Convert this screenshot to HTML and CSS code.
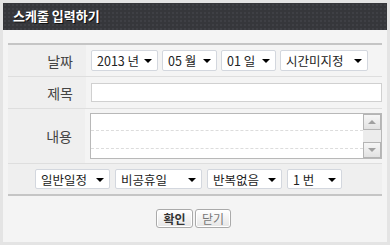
FILE: index.html
```html
<!DOCTYPE html>
<html>
<head>
  <meta charset="UTF-8">
  <title>스케줄 입력하기</title>
  <link rel="stylesheet" href="styles.css">
</head>
<body>
  <div class="popup">
    <div class="popup-title">스케줄 입력하기</div>

    <div class="sch-form">
      <div class="sch-row row-date">
        <div class="sch-label">날짜</div>
        <div class="sch-field">
          <span class="sel w67">2013 년<i class="arr"></i></span>
          <span class="sel w55">05 월<i class="arr"></i></span>
          <span class="sel w55">01 일<i class="arr"></i></span>
          <span class="sel w88">시간미지정<i class="arr"></i></span>
        </div>
      </div>
      <div class="sch-row row-title">
        <div class="sch-label">제목</div>
        <div class="sch-field">
          <input type="text" class="txt-title">
        </div>
      </div>
      <div class="sch-row row-memo">
        <div class="sch-label">내용</div>
        <div class="sch-field">
          <div class="memo">
            <div class="memo-lines"></div>
            <div class="memo-scroll">
              <span class="sb-btn"><i class="sb-up"></i></span>
              <span class="sb-track"></span>
              <span class="sb-btn"><i class="sb-down"></i></span>
            </div>
          </div>
        </div>
      </div>
      <div class="sch-row row-opt">
        <span class="sel w75">일반일정<i class="arr"></i></span>
        <span class="sel w87">비공휴일<i class="arr"></i></span>
        <span class="sel w75">반복없음<i class="arr"></i></span>
        <span class="sel w55">1 번<i class="arr"></i></span>
      </div>
    </div>

    <div class="btn-area">
      <button class="btn btn-ok">확인</button>
      <button class="btn">닫기</button>
    </div>
  </div>
</body>
</html>
```

FILE: styles.css
```css
html, body {
  margin: 0;
  padding: 0;
}
body {
  width: 390px;
  height: 245px;
  box-sizing: border-box;
  padding: 3px;
  background-color: #e4e4e4;
  font-family: "Noto Sans CJK KR", "Noto Sans", sans-serif;
  font-size: 13px;
  color: #333;
}
.popup {
  height: 239px;
  background-color: #f4f4f4;
}
.popup-title {
  height: 27px;
  line-height: 26px;
  padding-left: 10px;
  font-size: 13px;
  font-weight: bold;
  color: #fff;
  text-shadow: 1px 1px 0 #111;
  background-color: #36373b;
  background-image: radial-gradient(circle, #3f4045 1px, transparent 1px);
  background-size: 4px 4px;
}

/* form */
.sch-form {
  margin: 13px 5px 0;
  border-top: 2px solid #c5c5c5;
  border-bottom: 2px solid #c5c5c5;
}
.sch-row {
  display: flex;
  border-bottom: 1px solid #dedede;
}
.sch-row:last-child {
  border-bottom: none;
}
.row-date { height: 31px; }
.row-title { height: 31px; }
.row-memo { height: 54px; }
.row-opt {
  height: 30px;
  align-items: center;
  gap: 5px;
  padding-left: 27px;
  background-color: #efefef;
}
.sch-label {
  width: 78px;
  box-sizing: border-box;
  padding-right: 13px;
  display: flex;
  align-items: center;
  justify-content: flex-end;
  background-color: #efefef;
  font-size: 14px;
  color: #444;
}
.sch-field {
  flex: 1;
  display: flex;
  align-items: center;
  gap: 4px;
  padding-left: 5px;
}

/* select boxes */
.sel {
  position: relative;
  display: flex;
  align-items: center;
  box-sizing: border-box;
  height: 21px;
  padding-left: 5px;
  background-color: #fff;
  border: 1px solid #d3d7de;
  border-radius: 2px;
  font-size: 12.5px;
  color: #222;
  white-space: pre;
}
.row-opt .sel {
  height: 20px;
}
.w55 { width: 55px; }
.w67 { width: 67px; }
.w75 { width: 75px; }
.w87 { width: 87px; }
.w88 { width: 88px; }
.arr {
  position: absolute;
  right: 5px;
  top: 8px;
  width: 0;
  height: 0;
  border-left: 4px solid transparent;
  border-right: 4px solid transparent;
  border-top: 4px solid #000;
}

/* title input */
.txt-title {
  width: 291px;
  height: 19px;
  margin: 0;
  padding: 0 4px;
  box-sizing: border-box;
  border: 1px solid #d0d0d0;
  background: #fff;
}

/* memo */
.memo {
  display: flex;
  width: 292px;
  height: 46px;
  box-sizing: border-box;
  border: 1px solid #b8b8b8;
  background: #fff;
}
.memo-lines {
  flex: 1;
  margin-top: 16px;
  height: 17px;
  border-top: 1px dashed #dcdcdc;
  border-bottom: 1px dashed #dcdcdc;
}
.memo-scroll {
  width: 18px;
  display: flex;
  flex-direction: column;
  background-color: #ececec;
}
.sb-btn {
  position: relative;
  height: 16px;
  box-sizing: border-box;
  border: 1px solid #b4b4b4;
  background: linear-gradient(#f6f6f6, #e2e2e2);
}
.sb-track {
  flex: 1;
}
.sb-up, .sb-down {
  position: absolute;
  left: 4px;
  top: 5px;
  width: 0;
  height: 0;
  border-left: 4px solid transparent;
  border-right: 4px solid transparent;
}
.sb-up { border-bottom: 4px solid #a0a0a0; }
.sb-down { border-top: 4px solid #a0a0a0; }

/* buttons */
.btn-area {
  display: flex;
  justify-content: center;
  gap: 2px;
  margin-top: 13px;
  padding-right: 3px;
}
.btn {
  height: 19px;
  width: 36px;
  padding: 0;
  font-family: inherit;
  font-size: 12px;
  line-height: 16px;
  color: #777;
  border: 1px solid #aaa;
  border-radius: 3px;
  background: linear-gradient(#ffffff, #e6e6e6);
  box-shadow: inset 0 0 0 1px #fff;
  cursor: pointer;
}
.btn-ok {
  width: 37px;
  font-weight: bold;
  color: #333;
}
```
